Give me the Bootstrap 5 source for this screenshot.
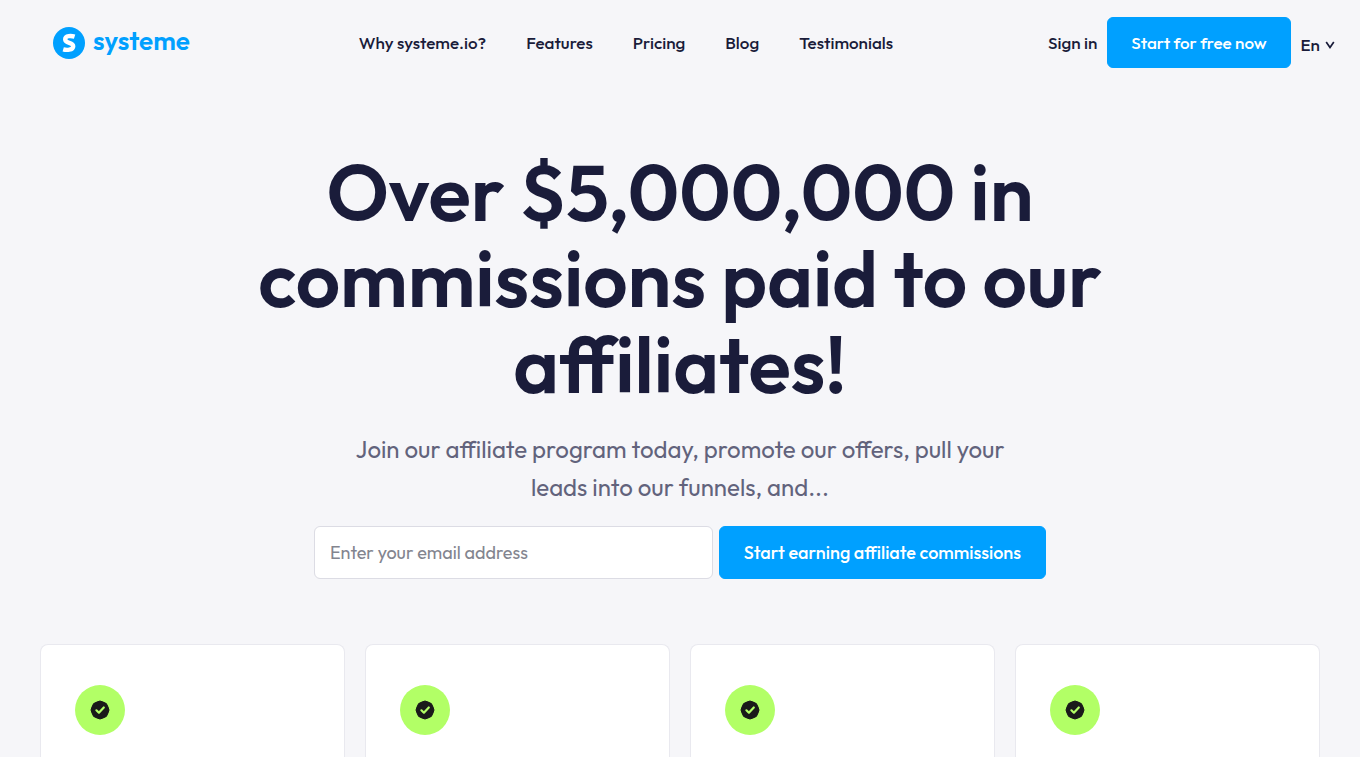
<!DOCTYPE html>
<html lang="en">
<head>
<meta charset="utf-8">
<meta name="viewport" content="width=device-width, initial-scale=1">
<title>systeme.io affiliate program</title>
<link href="https://cdn.jsdelivr.net/npm/bootstrap@5.3.0/dist/css/bootstrap.min.css" rel="stylesheet">
<style>
  body { background: #f6f6f9; color: #1a1c3a; font-family: "Outfit", Lato, "Open Sans", sans-serif; font-size: 17px; line-height: 24px; }
  a { color: inherit; text-decoration: none; }
  .site-bar { height: 85px; padding: 0 25px 0 53px; font-weight: 500; }
  .brand-link { gap: 8px; padding-right: 14px; }
  .brand-word { color: #00a0ff; font-size: 26px; font-weight: 600; line-height: 32px; padding-bottom: 4px; }
  .site-menu { gap: 40px; }
  .account { gap: 10px; }
  .btn-azure { --bs-btn-bg: #00a0ff; --bs-btn-border-color: #00a0ff; --bs-btn-color: #fff; --bs-btn-hover-bg: #008fe6; --bs-btn-hover-border-color: #008fe6; --bs-btn-hover-color: #fff; --bs-btn-font-size: 18px; --bs-btn-font-weight: 500; --bs-btn-border-radius: 6px; --bs-btn-line-height: 24px; --bs-btn-padding-x: 24px; }
  .btn-top { --bs-btn-font-size: 17px; --bs-btn-padding-x: 23px; height: 51px; }
  .btn-lang { --bs-btn-font-size: 17px; --bs-btn-font-weight: 500; --bs-btn-color: #1a1c3a; --bs-btn-line-height: 24px; gap: 5px; padding: 4px 0 0; border: 0; }
  .hero-title { font-size: 78px; line-height: 86px; font-weight: 600; margin: 64px 0 0; }
  .hero-text { color: #62637c; font-size: 24px; line-height: 38px; margin: 23px 0 0; }
  .signup { max-width: 732px; gap: 6px; margin: 20px auto 0; }
  .signup .form-control { height: 53px; border-color: #dcdce4; border-radius: 6px; padding: 12px 15px; font-size: 18px; }
  .signup .form-control::placeholder { color: #83858f; }
  .signup .btn { height: 53px; }
  .perks { padding: 65px 40px 0; }
  .perks .row { --bs-gutter-x: 20px; }
  .perk { background: #fff; border: 1px solid #e9e9ef; border-bottom: 0; border-radius: 8px 8px 0 0; padding: 40px 34px 22px; }
  .perk-icon { width: 50px; height: 50px; background: #b2ff66; }
</style>
</head>
<body class="min-vh-100 d-flex flex-column">
<svg class="d-none" aria-hidden="true">
  <symbol id="seal" viewBox="0 0 20 20">
    <circle cx="10" cy="10" r="8.500" fill="#1a1a1a"/>
    <path d="M10 1L13 2L16.400 3.600L18 7L19 10L18 13L16.400 16.400L13 18L10 19L7 18L3.600 16.400L2 13L1 10L2 7L3.600 3.600L7 2Z" fill="#1a1a1a" stroke="#1a1a1a" stroke-linejoin="round"/>
    <path d="M6.400 10.300L8.900 12.700L13.800 7.500" fill="none" stroke="#b2ff66" stroke-width="2.200" stroke-linecap="round" stroke-linejoin="round"/>
  </symbol>
</svg>
<header class="site-bar d-flex align-items-center justify-content-between">
  <a href="#" class="brand-link d-flex align-items-center">
    <svg width="32" height="32" viewBox="0 0 32 32" aria-hidden="true"><circle cx="16" cy="16" r="16" fill="#00a0ff"/><path d="M21.600 9.700C18.500 8.700 12.200 8.400 12.200 12.200C12.200 17 20.200 14.600 20.200 19.200C20.200 23.400 13.200 23.200 10.200 22.300" fill="none" stroke="#fff" stroke-width="4.400"/></svg>
    <span class="brand-word">systeme</span>
  </a>
  <nav class="site-menu d-flex">
    <a href="#">Why systeme.io?</a><a href="#">Features</a><a href="#">Pricing</a><a href="#">Blog</a><a href="#">Testimonials</a>
  </nav>
  <div class="account d-flex align-items-center">
    <a href="#">Sign in</a>
    <button type="button" class="btn btn-azure btn-top">Start for free now</button>
    <button type="button" class="btn btn-lang d-flex align-items-center">En
      <svg width="10" height="8" viewBox="0 0 10 8" aria-hidden="true"><path d="M1.200 1L5 6.500L8.800 1" fill="none" stroke="#1a1c3a" stroke-width="1.700"/></svg></button>
  </div>
</header>
<main class="flex-grow-1 d-flex flex-column">
  <section class="text-center">
    <h1 class="hero-title">Over $5,000,000 in<br>commissions paid to our<br>affiliates!</h1>
    <p class="hero-text">Join our affiliate program today, promote our offers, pull your<br>leads into our funnels, and...</p>
    <form class="signup d-flex">
      <input type="email" class="form-control flex-grow-1" placeholder="Enter your email address" aria-label="Email address">
      <button type="submit" class="btn btn-azure flex-shrink-0">Start earning affiliate commissions</button>
    </form>
  </section>
  <section class="perks flex-grow-1 d-flex flex-column">
    <div class="row flex-grow-1">
      <div class="col-3"><div class="perk h-100"><div class="perk-icon rounded-circle d-flex align-items-center justify-content-center"><svg width="20" height="20" aria-hidden="true"><use href="#seal"/></svg></div></div></div>
      <div class="col-3"><div class="perk h-100"><div class="perk-icon rounded-circle d-flex align-items-center justify-content-center"><svg width="20" height="20" aria-hidden="true"><use href="#seal"/></svg></div></div></div>
      <div class="col-3"><div class="perk h-100"><div class="perk-icon rounded-circle d-flex align-items-center justify-content-center"><svg width="20" height="20" aria-hidden="true"><use href="#seal"/></svg></div></div></div>
      <div class="col-3"><div class="perk h-100"><div class="perk-icon rounded-circle d-flex align-items-center justify-content-center"><svg width="20" height="20" aria-hidden="true"><use href="#seal"/></svg></div></div></div>
    </div>
  </section>
</main>
<script src="https://cdn.jsdelivr.net/npm/bootstrap@5.3.0/dist/js/bootstrap.bundle.min.js"></script>
</body>
</html>
